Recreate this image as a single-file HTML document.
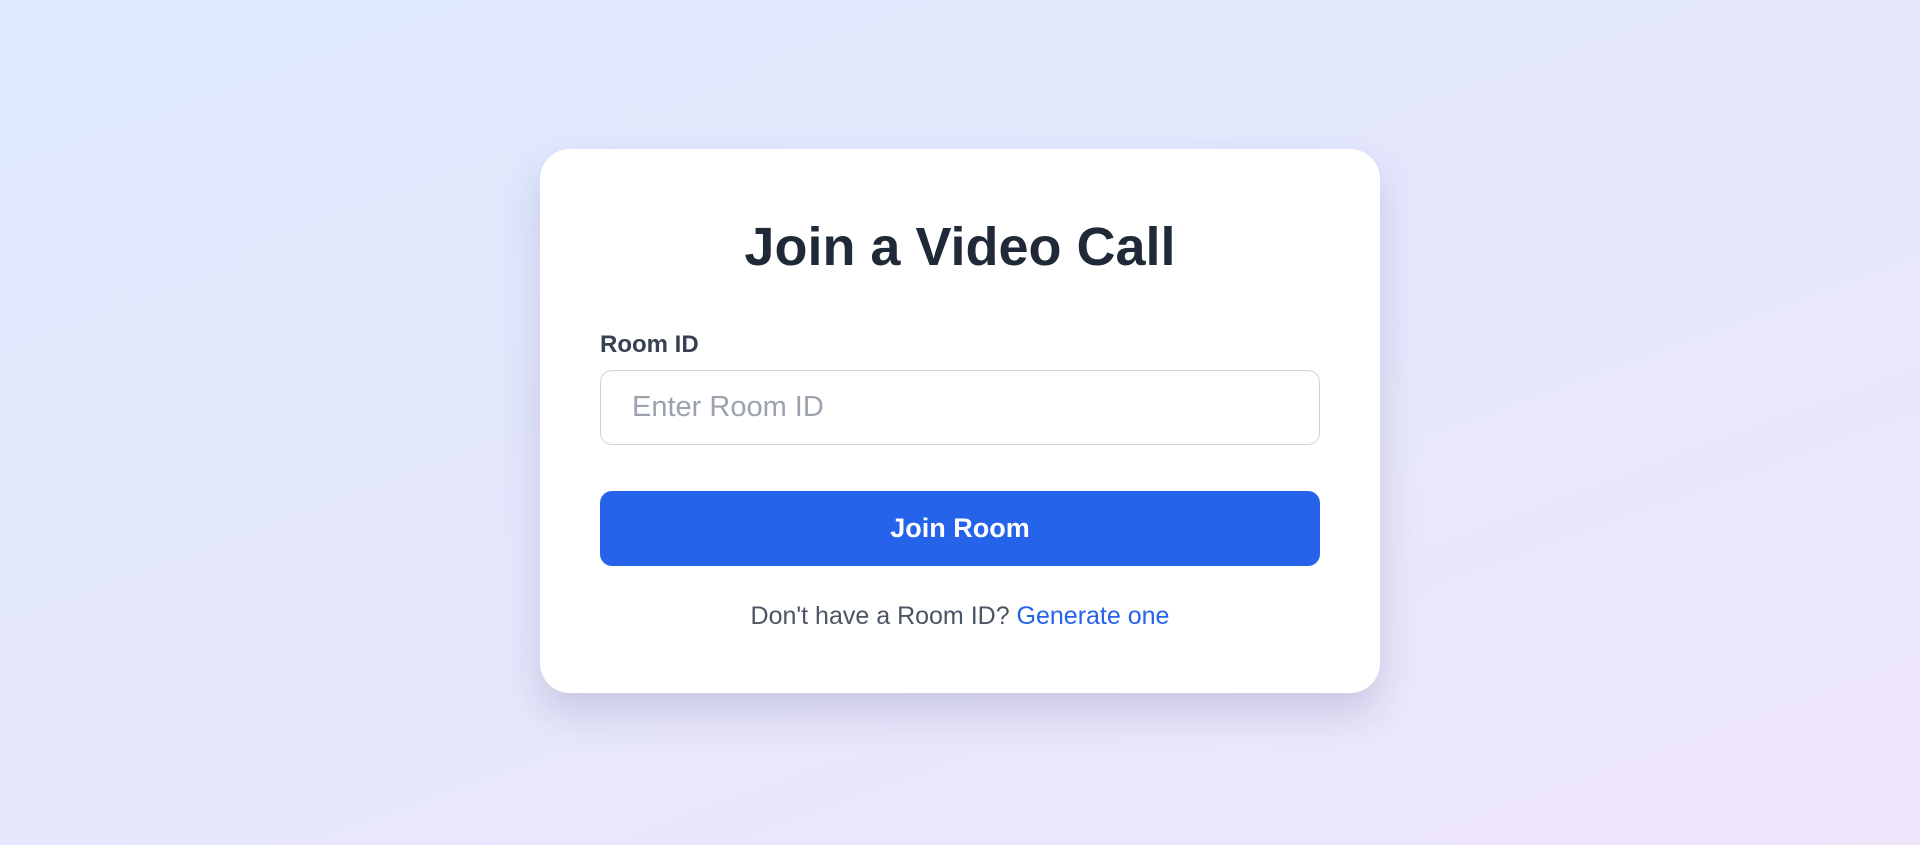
<!DOCTYPE html>
<html><head><meta charset="utf-8"><style>
html,body{margin:0;padding:0;width:1920px;height:845px;overflow:hidden}
body{background:linear-gradient(160deg,#dde9fd 0%,#e5e7fc 50%,#efe6fc 100%);font-family:"Liberation Sans",sans-serif;position:relative}
.card{position:absolute;left:540px;top:149px;width:840px;height:544px;background:#fff;border-radius:30px;box-shadow:0 20px 40px rgba(60,60,110,.18);box-sizing:border-box;padding:0 60px}
h1{margin:0;position:absolute;left:0;right:0;top:63px;text-align:center;font-size:54px;font-weight:bold;color:#1f2937;line-height:70px}
.lbl{position:absolute;left:60px;top:180px;font-size:24px;font-weight:bold;color:#374151;line-height:32px}
.inp{position:absolute;left:60px;top:221px;width:720px;height:75px;box-sizing:border-box;border:1.5px solid #d1d5db;border-radius:12px;padding-left:31px;font-size:29px;line-height:72px;color:#9ca3af}
.btn{position:absolute;left:60px;top:342px;width:720px;height:75px;background:#2563eb;border-radius:12px;color:#fff;font-size:27px;font-weight:bold;text-align:center;line-height:75px}
.ft{position:absolute;left:0;right:0;top:451px;text-align:center;font-size:25px;color:#4b5563;line-height:32px}
.ft span{color:#2563eb}
</style></head><body>
<div class="card">
<h1>Join a Video Call</h1>
<div class="lbl">Room ID</div>
<div class="inp">Enter Room ID</div>
<div class="btn">Join Room</div>
<div class="ft">Don't have a Room ID? <span>Generate one</span></div>
</div>
</body></html>
